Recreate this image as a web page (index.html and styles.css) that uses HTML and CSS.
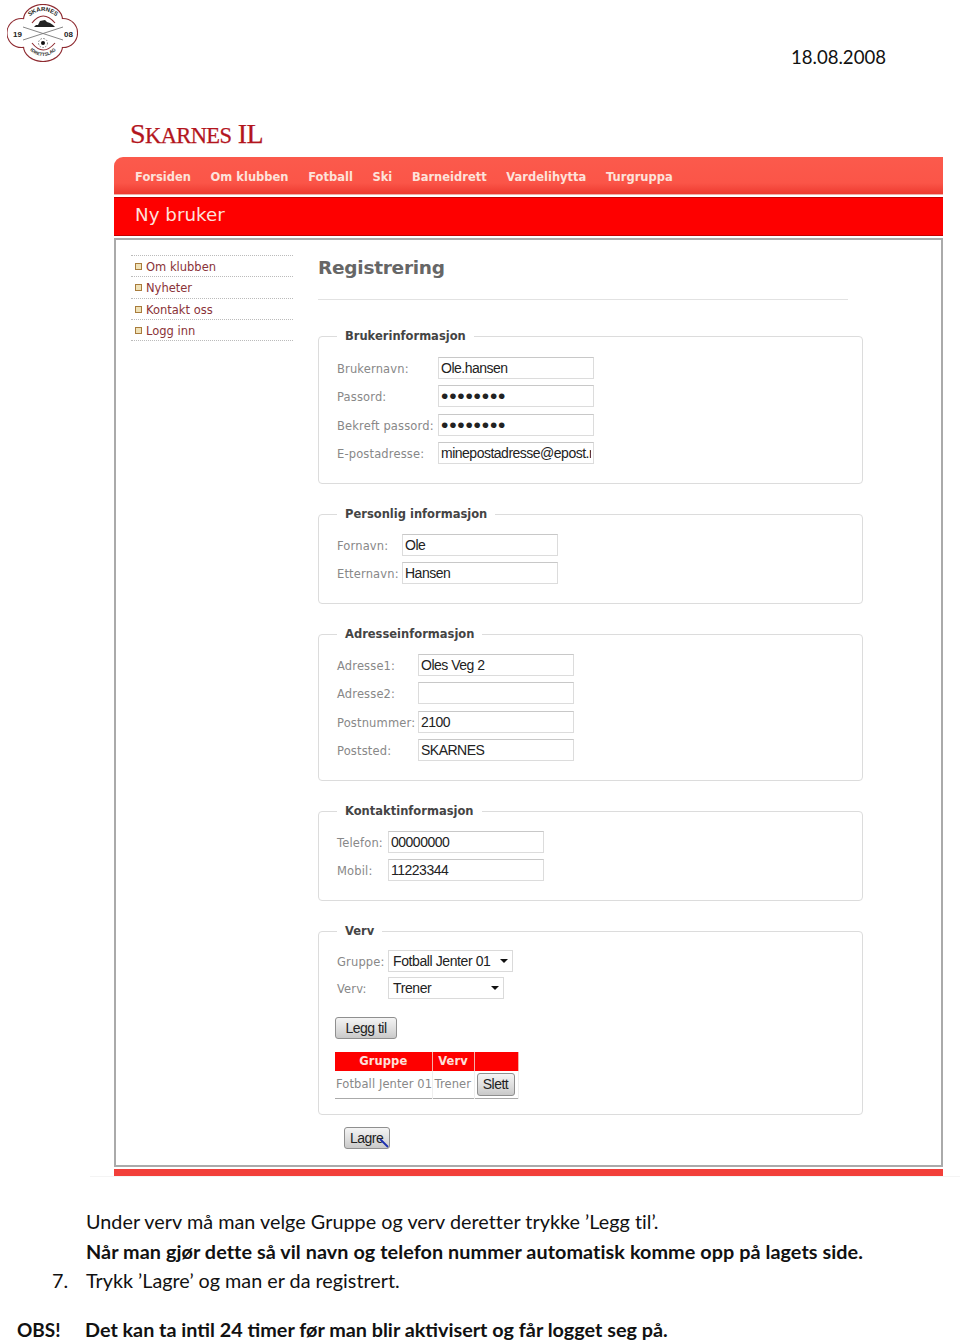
FILE: index.html
```html
<!DOCTYPE html>
<html lang="no">
<head>
<meta charset="utf-8">
<title>Skarnes IL - Ny bruker</title>
<link rel="stylesheet" href="styles.css">
</head>
<body>
<header class="doc-head">
  <svg class="logo" viewBox="0 0 71 58" width="71" height="58" aria-label="Skarnes Idrettslag">
    <g fill="#fff" stroke="#8e2a30" stroke-width="2.2">
      <ellipse cx="36" cy="16" rx="19" ry="15"/>
      <ellipse cx="36" cy="42" rx="19" ry="15"/>
      <circle cx="14.5" cy="29" r="14"/>
      <circle cx="56" cy="29" r="14"/>
    </g>
    <g fill="#fff">
      <ellipse cx="36" cy="16" rx="19" ry="15"/>
      <ellipse cx="36" cy="42" rx="19" ry="15"/>
      <circle cx="14.5" cy="29" r="14"/>
      <circle cx="56" cy="29" r="14"/>
    </g>
    <path d="M25 19 Q36 5 48 19 M25 39 Q36 53 48 39" fill="none" stroke="#8e2a30" stroke-width="1.1"/>
    <path d="M16 23 L56 36 M16 36 L56 23" stroke="#777" stroke-width=".9" fill="none"/>
    <path d="M27 23 L29 21 L31 21 L33 17 L38 16 L40 18 L43 19 L46 21 L48 23 Z" fill="#222"/>
    <circle cx="36" cy="39" r="4.5" fill="#fff" stroke="#555" stroke-width=".8" stroke-dasharray="1.5 1.5"/>
    <circle cx="36" cy="39" r="2" fill="#111"/>
    <text x="6" y="33" class="logo-year">19</text>
    <text x="66" y="33" class="logo-year" text-anchor="end">08</text>
    <path id="arc-top" d="M20 15 Q36 -1 52 15" fill="none"/>
    <path id="arc-bot" d="M19 42 Q36 62 53 42" fill="none"/>
    <text class="logo-arc"><textPath href="#arc-top" startOffset="50%" text-anchor="middle">SKARNES</textPath></text>
    <text class="logo-arc small"><textPath href="#arc-bot" startOffset="50%" text-anchor="middle">IDRETTSLAG</textPath></text>
  </svg>
  <div class="date">18.08.2008</div>
</header>

<main class="site">
  <h1 class="brand">S<span class="caps">karnes</span> IL</h1>
  <nav class="topnav">
    <a>Forsiden</a><a>Om klubben</a><a>Fotball</a><a>Ski</a><a>Barneidrett</a><a>Vardelihytta</a><a>Turgruppa</a>
  </nav>
  <div class="titlebar">Ny bruker</div>
  <div class="content">
    <aside class="side">
      <ul>
        <li>Om klubben</li>
        <li>Nyheter</li>
        <li>Kontakt oss</li>
        <li>Logg inn</li>
      </ul>
    </aside>
    <section class="form">
      <h2>Registrering</h2>
      <fieldset class="fs fs1">
        <legend>Brukerinformasjon</legend>
        <div class="row"><label>Brukernavn:</label><input value="Ole.hansen" readonly></div>
        <div class="row"><label>Passord:</label><input type="password" class="pw" value="abcdefgh" readonly></div>
        <div class="row"><label>Bekreft passord:</label><input type="password" class="pw" value="abcdefgh" readonly></div>
        <div class="row"><label>E-postadresse:</label><input value="minepostadresse@epost.no" readonly></div>
      </fieldset>
      <fieldset class="fs fs2">
        <legend>Personlig informasjon</legend>
        <div class="row"><label>Fornavn:</label><input value="Ole" readonly></div>
        <div class="row"><label>Etternavn:</label><input value="Hansen" readonly></div>
      </fieldset>
      <fieldset class="fs fs3">
        <legend>Adresseinformasjon</legend>
        <div class="row"><label>Adresse1:</label><input value="Oles Veg 2" readonly></div>
        <div class="row"><label>Adresse2:</label><input value="" readonly></div>
        <div class="row"><label>Postnummer:</label><input value="2100" readonly></div>
        <div class="row"><label>Poststed:</label><input value="SKARNES" readonly></div>
      </fieldset>
      <fieldset class="fs fs4">
        <legend>Kontaktinformasjon</legend>
        <div class="row"><label>Telefon:</label><input value="00000000" readonly></div>
        <div class="row"><label>Mobil:</label><input value="11223344" readonly></div>
      </fieldset>
      <fieldset class="fs fs4 fs5">
        <legend>Verv</legend>
        <div class="row sel"><label>Gruppe:</label><div class="select s1">Fotball Jenter 01<i></i></div></div>
        <div class="row sel"><label>Verv:</label><div class="select s2">Trener<i></i></div></div>
        <button class="btn add" type="button">Legg til</button>
        <table class="roles">
          <thead><tr><th class="c1">Gruppe</th><th class="c2">Verv</th><th class="c3"></th></tr></thead>
          <tbody><tr><td>Fotball Jenter 01</td><td>Trener</td><td class="act"><button class="btn" type="button">Slett</button></td></tr></tbody>
        </table>
      </fieldset>
      <div class="save">
        <button class="btn" type="button">Lagre</button>
        <svg class="cursor" viewBox="0 0 10 10" width="10" height="10"><path d="M1 1 L9 9" stroke="#1c2fb0" stroke-width="1.8"/></svg>
      </div>
    </section>
  </div>
  <div class="footbar"></div>
</main>

<section class="doc-text">
  <p class="l1">Under verv må man velge Gruppe og verv deretter trykke ’Legg til’.</p>
  <p class="l2"><b>Når man gjør dette så vil navn og telefon nummer automatisk komme opp på lagets side.</b></p>
  <p class="l3"><span class="mark">7.</span>Trykk ’Lagre’ og man er da registrert.</p>
  <p class="l4"><b class="mark obs">OBS!</b><b>Det kan ta intil 24 timer før man blir aktivisert og får logget seg på.</b></p>
</section>
</body>
</html>
```
FILE: styles.css
```css
* { box-sizing: border-box; }
html, body { margin: 0; padding: 0; }
body { width: 960px; height: 1344px; overflow: hidden; background: #fff; font-family: "DejaVu Sans", sans-serif; color: #333; }

.doc-head { height: 121px; position: relative; display: flex; justify-content: flex-end; padding: 45px 74px 0 0; }
.logo { position: absolute; left: 7px; top: 4px; }
.logo-year { font: bold 8px "Liberation Sans", sans-serif; fill: #222; }
.logo-arc { font: bold 6px "Liberation Sans", sans-serif; fill: #222; }
.logo-arc.small { font-size: 4.6px; }
.date { font: 18.6px/24px Lato, sans-serif; color: #111; }

.site { margin-left: 114px; width: 829px; }
.brand { margin: 0 0 0 16px; height: 36px; font: 400 28px/26px "Liberation Serif", serif; color: #b3151d; letter-spacing: -0.6px; -webkit-text-stroke: 0.25px #b3151d; }
.caps { font-size: 22.5px; text-transform: uppercase; }
.topnav { height: 38px; display: flex; gap: 19.6px; align-items: center; padding: 2px 0 0 21px; background: linear-gradient(#fb5a4c, #fb5548 70%, #ee3a30); border-radius: 9px 0 0 0; border-bottom: 1px solid #f2b0a8; }
.topnav a { font: bold 11.5px/14px "DejaVu Sans", sans-serif; color: #fde2da; }
.titlebar { margin-top: 2px; height: 39px; padding: 5px 0 0 21px; background: #fe0000; border-top: 1px solid #c40000; border-bottom: 1px solid #c40000; font: 18.3px/24px "DejaVu Sans", sans-serif; color: #fde0dc; }
.content { margin-top: 2px; height: 929px; display: flex; border: 2px solid #aaa; padding: 15px 0 0 15px; }

.side { width: 162px; margin-right: 25px; flex: none; }
.side ul { margin: 0; padding: 0; list-style: none; border-top: 1px dotted #bbb; }
.side li { position: relative; height: 21.3px; padding-left: 15px; font: 11.5px/23px "DejaVu Sans", sans-serif; color: #8a3338; border-bottom: 1px dotted #bbb; }
.side li::before { content: ""; position: absolute; left: 4px; top: 7px; width: 5px; height: 5px; background: #f0e2b8; border: 1px solid #a87c3c; }

.form { width: 545px; }
h2 { margin: 0 15px 29px 0; height: 45px; font: bold 18.5px/25px "DejaVu Sans", sans-serif; color: #666; letter-spacing: -0.25px; border-bottom: 1px solid #e2e2e2; }
.fs { margin: 0 0 23px; padding: 10px 18px 0 18px; border: 1px solid #dcdcdc; border-radius: 4px; min-width: 0; }
legend { margin-left: 0; padding: 0 8px; font: bold 11.5px/14px "DejaVu Sans", sans-serif; color: #444; }
.row { display: flex; align-items: center; height: 28.3px; }
.row label { margin-top: 2px; font: 11.5px/14px "DejaVu Sans", sans-serif; color: #888; flex: none; letter-spacing: 0.15px; }
.row input { width: 156px; height: 22px; padding: 0 2px; border: 1px solid #dcdcdc; border-top-color: #c8c8c8; background: #fff; font: 14px/18px "Liberation Sans", sans-serif; color: #222; outline: none; letter-spacing: -0.5px; }
.row input.pw { font-size: 21px; letter-spacing: 0.8px; }
.fs1 { height: 155px; padding-top: 11px; }
.fs2 { height: 97px; }
.fs3 { height: 154px; }
.fs4 { height: 97px; }
.fs1 label { width: 101px; }
.fs2 label { width: 65px; }
.fs3 label { width: 81px; }
.fs4 label { width: 51px; }
.fs5 { height: 191px; margin-bottom: 12px; padding-top: 9px; }
.row.sel { height: 27px; }
.select { position: relative; height: 22px; padding-left: 4px; border: 1px solid #dadada; background: #fff; font: 14px/20px "Liberation Sans", sans-serif; color: #222; letter-spacing: -0.4px; }
.select i { position: absolute; right: 4px; top: 8px; width: 0; height: 0; border: 4px solid transparent; border-top-color: #111; border-bottom: 0; }
.s1 { width: 125px; }
.s2 { width: 116px; }

.btn { height: 22px; padding: 0 8px; border: 1px solid #8f8f8f; border-radius: 3px; background: linear-gradient(#f4f4f4, #dcdcdc 60%, #c9c9c9); font: 14px/18px "Liberation Sans", sans-serif; color: #222; letter-spacing: -0.5px; }
.add { display: block; margin: 16px 0 0 -2px; width: 62px; }
.roles { margin: 13px 0 0 -2px; width: 184px; border-collapse: collapse; table-layout: fixed; border-bottom: 1px solid #aaa; border-right: 1px solid #ccc; }
.roles th { height: 19px; padding: 0; background: #fe0000; border-right: 1px solid #f4b0a8; color: #fde0dc; font: bold 11.5px/19px "DejaVu Sans", sans-serif; letter-spacing: 0.1px; }
.roles .c1 { width: 97px; }
.roles .c2 { width: 42px; }
.roles td { height: 27px; padding: 0 0 0 1px; font: 11.5px/14px "DejaVu Sans", sans-serif; color: #888; letter-spacing: 0.1px; white-space: nowrap; overflow: hidden; border-right: 1px solid #eee; }
.roles td + td { padding-left: 2px; }
.roles td.act { padding-left: 2px; }
.roles .btn { padding: 0 4px; width: 38px; height: 23px; }
.save { position: relative; margin-left: 26px; width: 46px; }
.save .btn { width: 46px; padding: 0 0 0 5px; text-align: left; }
.cursor { position: absolute; left: 35px; top: 11px; }

.footbar { position: relative; margin-top: 2px; height: 7px; background: #f23f3a; }
.footbar::after { content: ""; position: absolute; left: -24px; right: -17px; top: 7px; height: 1px; background: #f4f4f4; }

.doc-text { margin-top: 31px; font: 19.8px/29.5px Lato, sans-serif; color: #111; }
.doc-text p { margin: 0; padding-left: 86px; position: relative; white-space: nowrap; }
.l1 { letter-spacing: 0.03px; }
.l2 { letter-spacing: 0.07px; }
.mark { position: absolute; left: 52px; }
.obs { left: 17px; font-size: 19px; }
.l4 { margin-top: 19.5px !important; padding-left: 85px !important; }
```
